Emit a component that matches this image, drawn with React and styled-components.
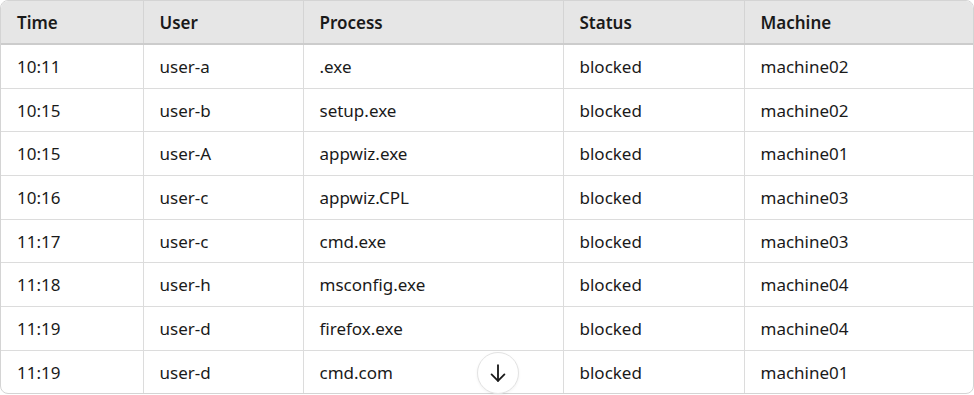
import React from "react";
import styled, { createGlobalStyle } from "styled-components";

const Global = createGlobalStyle`
  html, body { margin: 0; padding: 0; background: #ffffff; }
  body { font-family: "Noto Sans", "Open Sans", sans-serif; }
`;

const Wrap = styled.div`
  position: relative;
  width: 974px;
  height: 395px;
  box-sizing: border-box;
`;

const Frame = styled.div`
  border: 1px solid #d4d4d4;
  border-radius: 8px;
  overflow: hidden;
  height: 394px;
  box-sizing: border-box;
`;

const Table = styled.table`
  width: 100%;
  border-collapse: collapse;
  table-layout: fixed;
  font-size: 17px;
  color: #1a1a1a;
`;

const Th = styled.th`
  background: #e6e6e6;
  text-align: left;
  font-weight: 600;
  height: 42px;
  padding: 0 16px;
  border-right: 1px solid #d4d4d4;
  border-bottom: 2px solid #cccccc;
  &:last-child { border-right: none; }
`;

const Td = styled.td`
  height: 42.7px;
  padding: 0 16px;
  border-right: 1px solid #dcdcdc;
  border-bottom: 1px solid #dcdcdc;
  &:last-child { border-right: none; }
  tr:last-child & { border-bottom: none; }
`;

const ScrollBtn = styled.button`
  position: absolute;
  left: 477px;
  top: 352px;
  width: 42px;
  height: 42px;
  border-radius: 50%;
  background: #ffffff;
  border: 1px solid #e3e3e3;
  box-shadow: 0 1px 3px rgba(0,0,0,0.06);
  display: flex;
  align-items: center;
  justify-content: center;
  padding: 0;
  color: #1a1a1a;
`;

const cols = [142, 160, 260, 181, 229];
const heads = ["Time", "User", "Process", "Status", "Machine"];
const rows = [
  ["10:11", "user-a", ".exe", "blocked", "machine02"],
  ["10:15", "user-b", "setup.exe", "blocked", "machine02"],
  ["10:15", "user-A", "appwiz.exe", "blocked", "machine01"],
  ["10:16", "user-c", "appwiz.CPL", "blocked", "machine03"],
  ["11:17", "user-c", "cmd.exe", "blocked", "machine03"],
  ["11:18", "user-h", "msconfig.exe", "blocked", "machine04"],
  ["11:19", "user-d", "firefox.exe", "blocked", "machine04"],
  ["11:19", "user-d", "cmd.com", "blocked", "machine01"],
];

export default function App() {
  return (
    <>
      <Global />
      <Wrap>
        <Frame>
          <Table>
            <colgroup>
              {cols.map((w, i) => <col key={i} style={{ width: w }} />)}
            </colgroup>
            <thead>
              <tr>{heads.map((h) => <Th key={h}>{h}</Th>)}</tr>
            </thead>
            <tbody>
              {rows.map((r, i) => (
                <tr key={i}>{r.map((c, j) => <Td key={j}>{c}</Td>)}</tr>
              ))}
            </tbody>
          </Table>
        </Frame>
        <ScrollBtn aria-label="Scroll down">
          <svg width="22" height="22" viewBox="0 0 24 24" fill="none" stroke="currentColor" strokeWidth="2" strokeLinecap="round" strokeLinejoin="round">
            <path d="M12 3.5v17" />
            <path d="M5 13.5l7 7 7-7" />
          </svg>
        </ScrollBtn>
      </Wrap>
    </>
  );
}
